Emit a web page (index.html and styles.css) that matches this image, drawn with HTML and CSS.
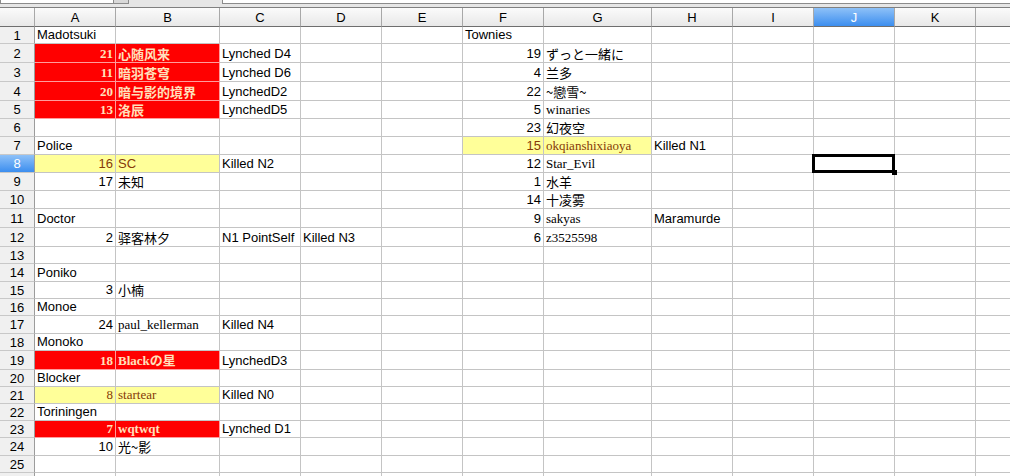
FILE: index.html
```html
<!DOCTYPE html>
<html lang="zh">
<head>
<meta charset="UTF-8">
<title>Sheet1</title>
<link rel="stylesheet" href="styles.css">
</head>
<body>

<div class="toolbar">
<div class="namebox"></div>
<div class="drop"></div>
<div class="formula"></div>
</div>

<div class="sheet">
<div class="h top"></div><div class="h top">A</div><div class="h top">B</div><div class="h top">C</div><div class="h top">D</div><div class="h top">E</div><div class="h top">F</div><div class="h top">G</div><div class="h top">H</div><div class="h top">I</div><div class="h top sel">J</div><div class="h top">K</div><div class="h top"></div>

<div class="h">1</div><div>Madotsuki</div><div></div><div></div><div></div><div></div><div>Townies</div><div></div><div></div><div></div><div></div><div></div><div></div>
<div class="h">2</div><div class="n red serif">21</div><div class="red cjk">心随风来</div><div>Lynched D4</div><div></div><div></div><div class="n">19</div><div class="cjk">ずっと一緒に</div><div></div><div></div><div></div><div></div><div></div>
<div class="h">3</div><div class="n red serif">11</div><div class="red cjk">暗羽苍穹</div><div>Lynched D6</div><div></div><div></div><div class="n">4</div><div class="cjk">兰多</div><div></div><div></div><div></div><div></div><div></div>
<div class="h">4</div><div class="n red serif">20</div><div class="red cjk">暗与影的境界</div><div>LynchedD2</div><div></div><div></div><div class="n">22</div><div class="cjk">~戀雪~</div><div></div><div></div><div></div><div></div><div></div>
<div class="h">5</div><div class="n red serif">13</div><div class="red cjk">洛辰</div><div>LynchedD5</div><div></div><div></div><div class="n">5</div><div class="serif">winaries</div><div></div><div></div><div></div><div></div><div></div>
<div class="h">6</div><div></div><div></div><div></div><div></div><div></div><div class="n">23</div><div class="cjk">幻夜空</div><div></div><div></div><div></div><div></div><div></div>
<div class="h">7</div><div>Police</div><div></div><div></div><div></div><div></div><div class="n yel">15</div><div class="yel serif">okqianshixiaoya</div><div>Killed N1</div><div></div><div></div><div></div><div></div>
<div class="h sel">8</div><div class="n yel">16</div><div class="yel">SC</div><div>Killed N2</div><div></div><div></div><div class="n">12</div><div class="serif">Star_Evil</div><div></div><div></div><div class="cur"><span class="cursor"></span></div><div></div><div></div>
<div class="h">9</div><div class="n">17</div><div class="cjk">未知</div><div></div><div></div><div></div><div class="n">1</div><div class="cjk">水羊</div><div></div><div></div><div></div><div></div><div></div>
<div class="h">10</div><div></div><div></div><div></div><div></div><div></div><div class="n">14</div><div class="cjk">十凌雾</div><div></div><div></div><div></div><div></div><div></div>
<div class="h">11</div><div>Doctor</div><div></div><div></div><div></div><div></div><div class="n">9</div><div class="serif">sakyas</div><div>Maramurde</div><div></div><div></div><div></div><div></div>
<div class="h">12</div><div class="n">2</div><div class="cjk">驿客林夕</div><div>N1 PointSelf</div><div>Killed N3</div><div></div><div class="n">6</div><div class="serif">z3525598</div><div></div><div></div><div></div><div></div><div></div>
<div class="h">13</div><div></div><div></div><div></div><div></div><div></div><div></div><div></div><div></div><div></div><div></div><div></div><div></div>
<div class="h">14</div><div>Poniko</div><div></div><div></div><div></div><div></div><div></div><div></div><div></div><div></div><div></div><div></div><div></div>
<div class="h">15</div><div class="n">3</div><div class="cjk">小楠</div><div></div><div></div><div></div><div></div><div></div><div></div><div></div><div></div><div></div><div></div>
<div class="h">16</div><div>Monoe</div><div></div><div></div><div></div><div></div><div></div><div></div><div></div><div></div><div></div><div></div><div></div>
<div class="h">17</div><div class="n">24</div><div class="serif">paul_kellerman</div><div>Killed N4</div><div></div><div></div><div></div><div></div><div></div><div></div><div></div><div></div><div></div>
<div class="h">18</div><div>Monoko</div><div></div><div></div><div></div><div></div><div></div><div></div><div></div><div></div><div></div><div></div><div></div>
<div class="h">19</div><div class="n red serif">18</div><div class="red serif">Blackの星</div><div>LynchedD3</div><div></div><div></div><div></div><div></div><div></div><div></div><div></div><div></div><div></div>
<div class="h">20</div><div>Blocker</div><div></div><div></div><div></div><div></div><div></div><div></div><div></div><div></div><div></div><div></div><div></div>
<div class="h">21</div><div class="n yel serif">8</div><div class="yel serif">startear</div><div>Killed N0</div><div></div><div></div><div></div><div></div><div></div><div></div><div></div><div></div><div></div>
<div class="h">22</div><div>Toriningen</div><div></div><div></div><div></div><div></div><div></div><div></div><div></div><div></div><div></div><div></div><div></div>
<div class="h">23</div><div class="n red serif">7</div><div class="red serif">wqtwqt</div><div>Lynched D1</div><div></div><div></div><div></div><div></div><div></div><div></div><div></div><div></div><div></div>
<div class="h">24</div><div class="n">10</div><div class="cjk">光~影</div><div></div><div></div><div></div><div></div><div></div><div></div><div></div><div></div><div></div><div></div>
<div class="h">25</div><div></div><div></div><div></div><div></div><div></div><div></div><div></div><div></div><div></div><div></div><div></div><div></div>
<div class="h"></div><div></div><div></div><div></div><div></div><div></div><div></div><div></div><div></div><div></div><div></div><div></div><div></div>
</div>

</body>
</html>
```

FILE: styles.css
```css
body { margin:0; background:#fff; font-family:"Liberation Sans", Arial, sans-serif; font-size:13px; color:#000; overflow:hidden; }

.toolbar { height:8px; box-sizing:border-box; background:#e6e6e6; display:flex; align-items:flex-start; border-bottom:1px solid #808080; }
.namebox { width:112px; height:3px; background:#fff; border:1px solid #8c8c8c; border-top:none; }
.drop { width:14px; height:3px; background:#d9d9d9; border:1px solid #8c8c8c; border-top:none; border-left:none; }
.formula { margin-left:93px; flex:1; height:3px; background:#fff; border:1px solid #8c8c8c; border-top:none; border-right:none; }

.sheet { display:grid; width:1057px;
  grid-template-columns:35px 81px 104px 81px 81px 81px 81px 108px 81px 81px 81px 81px 81px;
  grid-template-rows:19px 17px 19px 19px 19px 18px 18px 18px 18px 18px 18px 19px 19px 17px 18px 17px 17px 18px 17px 19px 17px 17px 17px 17px 18px 17px 20px; }
.sheet > div { box-sizing:border-box; border-right:1px solid #c4c4c4; border-bottom:1px solid #c4c4c4; display:flex; align-items:flex-end; padding:0 2px 1px; line-height:15px; white-space:nowrap; min-width:0; }

.sheet > .h { background:#f0f0f0; justify-content:center; align-items:center; padding:0; border-color:#c8c8c8; border-right-color:#9c9c9c; }
.sheet > .top { background:linear-gradient(#fbfbfb, #e8e8e8); border-right-color:#a8a8a8; border-bottom-color:#6e6e6e; }
.sheet > .sel { background:linear-gradient(#8ec1f8, #3c8eef); color:#fff; }

.n { justify-content:flex-end; }
.sheet > .red { background:#f00; color:#ffe0bc; font-weight:bold; border-color:#ff9c9c; }
.yel { background:#ffff99; color:#863a08; }
.serif { font-family:"Liberation Serif", "Times New Roman", "Noto Sans CJK SC", serif; }
.cjk { font-family:"Noto Sans CJK SC", "Noto Sans CJK JP", sans-serif; }

.cur { position:relative; }
.cursor { position:absolute; left:-2px; top:-1px; width:83px; height:19px; box-sizing:border-box; border:3px solid #000; }
.cursor::after { content:""; position:absolute; right:-5px; bottom:-5px; width:5px; height:5px; background:#000; }
```
